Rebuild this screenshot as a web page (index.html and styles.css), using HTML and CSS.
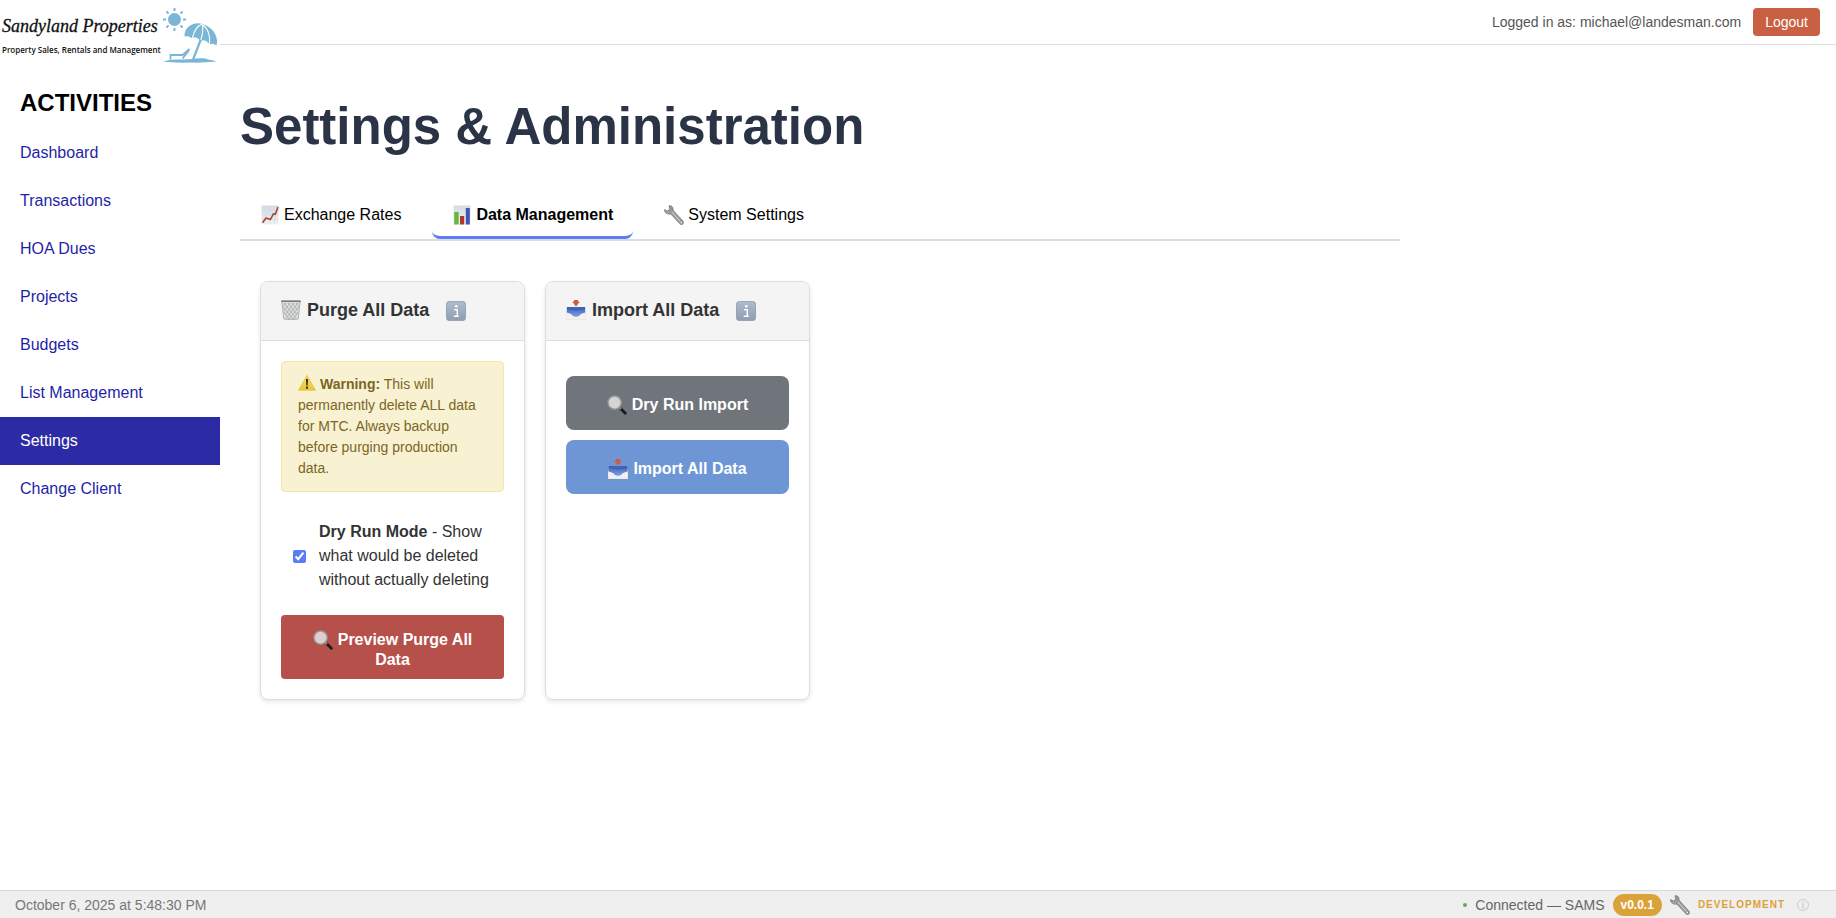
FILE: index.html
```html
<!DOCTYPE html>
<html lang="en">
<head>
<meta charset="utf-8">
<title>Settings &amp; Administration</title>
<link rel="stylesheet" href="styles.css">
</head>
<body>
<svg class="defs" aria-hidden="true">
  <defs>
    <linearGradient id="g-paper" x1="0" y1="0" x2="0" y2="1"><stop offset="0" stop-color="#d3dbe4"/><stop offset="1" stop-color="#eef1f4"/></linearGradient>
    <linearGradient id="g-metal" x1="0" y1="1" x2="1" y2="0"><stop offset="0" stop-color="#b4b6ba"/><stop offset="1" stop-color="#7e8084"/></linearGradient>
    <linearGradient id="g-info" x1="0" y1="0" x2="0" y2="1"><stop offset="0" stop-color="#b0bccd"/><stop offset="1" stop-color="#8e9db4"/></linearGradient>
    <linearGradient id="g-warn" x1="0" y1="0" x2="0" y2="1"><stop offset="0" stop-color="#f6df5e"/><stop offset="1" stop-color="#e8c63a"/></linearGradient>
    <linearGradient id="g-tray" x1="0" y1="0" x2="0" y2="1"><stop offset="0" stop-color="#3f5fae"/><stop offset="1" stop-color="#7da0ee"/></linearGradient>
    <symbol id="chart" viewBox="0 0 20 20">
      <rect x="1.500" y="0.500" width="17" height="19" fill="url(#g-paper)"/>
      <path d="M5.500 1v18M10 1v18M14.500 1v18M2 5.500h16M2 10h16M2 14.500h16" stroke="#cbd3dd" stroke-width=".4"/>
      <path d="M2.500 17.800L6 13l4.500 1.500 3-5.800 1.800.5L18 2" fill="none" stroke="#a8402f" stroke-width="1.500" stroke-linejoin="round"/>
    </symbol>
    <symbol id="bars" viewBox="0 0 20 20">
      <rect x="1.500" y="0.500" width="17" height="19" fill="url(#g-paper)"/>
      <rect x="2.200" y="7" width="4.500" height="12.500" fill="#69b544"/>
      <rect x="8" y="11" width="4.200" height="8.500" fill="#a83a28"/>
      <rect x="13.800" y="3" width="4" height="16.500" fill="#3f55b5"/>
    </symbol>
    <symbol id="wrench" viewBox="0 0 20 20">
      <path d="M.5 4.600L3.600 6 5.900 4 5 .8C7.600.2 9.600 2.400 9 5.200L19.200 16.400C20 18.600 18.400 20.300 16.400 19.300L6.800 9C3.600 9.800.4 8 .5 4.600Z" fill="url(#g-metal)" stroke="#6d6c70" stroke-width=".7"/>
      <path d="M7.800 6.800l8.500 9.600" stroke="#dbd9dc" stroke-width="1"/>
      <circle cx="17.300" cy="17.600" r=".8" fill="#eee"/>
    </symbol>
    <symbol id="basket" viewBox="0 0 20 20">
      <path d="M.8 1h18.400l-2 18q-7.200 1.500-14.400 0z" fill="#dcdddd"/>
      <path d="M3 3l12 15.500M7 3l9 12M11 3l6 8M15 3l3 4M2.500 7l9 12M3 12l5 7M17 3L5 18.500M13 3L4 15M9 3L3 11M5 3L2.500 6.500M17.500 7L8 19M17 12l-5 7" stroke="#9b9d9f" stroke-width=".6"/>
      <path d="M.8 1h18.400l-2 18q-7.200 1.500-14.400 0z" fill="none" stroke="#a0a1a3" stroke-width=".8"/>
      <path d="M.2 1.200h19.600" stroke="#77797b" stroke-width="1.400"/>
    </symbol>
    <symbol id="info" viewBox="0 0 20 20">
      <rect x=".4" y=".4" width="19.200" height="19.200" rx="3.200" fill="url(#g-info)" stroke="#8795ab" stroke-width=".8"/>
      <circle cx="10.300" cy="5.300" r="1.300" fill="#fff"/>
      <path d="M8 8.600h3.300v6.400M7.800 15.300h5" fill="none" stroke="#fff" stroke-width="1.400"/>
    </symbol>
    <symbol id="inbox" viewBox="0 0 20 20">
      <path d="M2 9h16l2 4.500V20H0v-6.500z" fill="#f3f1ee" stroke="#d2d0cd" stroke-width=".4"/>
      <path d="M.8 7h18.400v5.500L15 14q-2 3-5 3t-5-3L.8 12.500z" fill="url(#g-tray)"/>
      <path d="M1 8.500q9 3 18 0" fill="none" stroke="#35539c" stroke-width=".7"/>
      <path d="M8 0h4l.2 1.800h1.600L10 6.600 6.200 1.800h1.600z" fill="#cc5a45"/>
    </symbol>
    <symbol id="magnifier" viewBox="0 0 20 20">
      <path d="M13.500 13.500l4.800 4.700" stroke="#1b1b1c" stroke-width="2.800" stroke-linecap="round"/>
      <path d="M12 12l2 2" stroke="#8f8f91" stroke-width="2"/>
      <circle cx="7.600" cy="7.600" r="6.600" fill="#e6e3e4" fill-opacity=".86" stroke="#97989b" stroke-width="1.400"/>
    </symbol>
    <symbol id="warning" viewBox="0 0 20 20">
      <path d="M10 1.500L19.400 18H.6z" fill="url(#g-warn)" stroke="#e0bd3c" stroke-width=".8" stroke-linejoin="round"/>
      <path d="M8.900 5.500h2.200l-.5 7.500h-1.200z" fill="#222"/><circle cx="10" cy="15.200" r="1.200" fill="#222"/>
    </symbol>
  </defs>
</svg>

<div class="app">
  <aside class="sidebar">
    <div class="logo">
      <div class="logo-text">
        <span class="logo-name">Sandyland Properties</span>
        <span class="logo-tagline">Property Sales, Rentals and Management</span>
      </div>
      <svg class="logo-art" viewBox="0 0 54 56" aria-hidden="true">
        <g fill="#7ab6d6" stroke="#7ab6d6">
          <circle cx="11.500" cy="12.500" r="6.500" stroke="none"/>
          <path d="M11.500 1v3M11.500 21v3M0 12.500h3M20 12.500h3M3.400 4.400l2.200 2.200M17.400 18.400l2.200 2.200M3.400 20.600l2.200-2.200M17.400 6.600l2.200-2.200" stroke-width="2"/>
          <path d="M21.500 29.500C21 20 30 14.500 39 16.800 50 20 56 30 53.500 38.500 50.500 36.300 48.500 36.300 46.500 37.500 43.500 33.500 41 32.500 37.500 34 34.500 30.500 32 29.500 28.500 31 26 29.200 24 28.800 21.500 29.500Z" stroke="none"/>
          <path d="M38 32L29.500 54" stroke-width="2.200" fill="none"/>
          <path d="M0 54.500Q7 52.300 14 52.500 27 52.500 33 51.500 42 50.500 45 52.500 50 53 53.500 54.500 40 56 27 55.500 10 56 0 54.500Z" stroke="none"/>
          <path d="M7.500 52.500v-4.500H19.500L26.500 42M19.500 51.500L26 43.500M7 47.800h12.500" fill="none" stroke-width="1.800"/>
        </g>
        <path d="M39 17Q32 20 29.500 30.500M39.500 17.500Q40.500 25 37.800 33M39.500 17.500Q48 24 46.500 37" stroke="#fff" stroke-width="1.100" fill="none"/>
      </svg>
    </div>
    <h2 class="sidebar-title">ACTIVITIES</h2>
    <nav class="nav">
      <a class="nav-link" href="#dashboard">Dashboard</a>
      <a class="nav-link" href="#transactions">Transactions</a>
      <a class="nav-link" href="#hoa">HOA Dues</a>
      <a class="nav-link" href="#projects">Projects</a>
      <a class="nav-link" href="#budgets">Budgets</a>
      <a class="nav-link" href="#lists">List Management</a>
      <a class="nav-link active" href="#settings" aria-current="page">Settings</a>
      <a class="nav-link" href="#client">Change Client</a>
    </nav>
  </aside>

  <div class="content">
    <header class="topbar">
      <span class="user">Logged in as: michael@landesman.com</span>
      <button class="logout" type="button">Logout</button>
    </header>
    <main class="main">
      <h1 class="page-title">Settings &amp; Administration</h1>
      <div class="tabs" role="tablist">
        <button class="tab" type="button" role="tab"><svg class="emoji"><use href="#chart"/></svg>Exchange Rates</button>
        <button class="tab selected" type="button" role="tab" aria-selected="true"><svg class="emoji"><use href="#bars"/></svg>Data Management</button>
        <button class="tab" type="button" role="tab"><svg class="emoji"><use href="#wrench"/></svg>System Settings</button>
      </div>
      <div class="cards">
        <section class="card">
          <div class="card-head">
            <h3 class="card-title"><svg class="emoji"><use href="#basket"/></svg>Purge All Data</h3>
            <button class="info" type="button" aria-label="About purging"><svg class="emoji"><use href="#info"/></svg></button>
          </div>
          <div class="card-body">
            <p class="notice"><svg class="emoji"><use href="#warning"/></svg><strong>Warning:</strong> This will permanently delete ALL data for MTC. Always backup before purging production data.</p>
            <label class="dry-run" for="dry-run">
              <input class="check" id="dry-run" type="checkbox" checked>
              <span><strong>Dry Run Mode</strong> - Show what would be deleted without actually deleting</span>
            </label>
            <button class="btn btn-danger" type="button"><svg class="emoji"><use href="#magnifier"/></svg>Preview Purge All Data</button>
          </div>
        </section>
        <section class="card">
          <div class="card-head">
            <h3 class="card-title"><svg class="emoji"><use href="#inbox"/></svg>Import All Data</h3>
            <button class="info" type="button" aria-label="About importing"><svg class="emoji"><use href="#info"/></svg></button>
          </div>
          <div class="card-body">
            <div class="actions">
              <button class="btn btn-gray" type="button"><svg class="emoji"><use href="#magnifier"/></svg>Dry Run Import</button>
              <button class="btn btn-blue" type="button"><svg class="emoji"><use href="#inbox"/></svg>Import All Data</button>
            </div>
          </div>
        </section>
      </div>
    </main>
  </div>
</div>

<footer class="statusbar">
  <span class="date">October 6, 2025 at 5:48:30 PM</span>
  <div class="status">
    <span class="dot"></span>
    <span class="conn">Connected — SAMS</span>
    <span class="version">v0.0.1</span>
    <svg class="status-wrench" aria-hidden="true"><use href="#wrench"/></svg>
    <span class="env">DEVELOPMENT</span>
    <svg class="status-info" viewBox="0 0 12 12" aria-hidden="true"><circle cx="6" cy="6" r="5.500" fill="none" stroke="#c4c4c4" stroke-width=".8"/><path d="M4.800 5h1.400v3.800M4.600 8.900h3" fill="none" stroke="#c4c4c4" stroke-width=".8"/><circle cx="6" cy="3.200" r=".7" fill="#c4c4c4"/></svg>
  </div>
</footer>
</body>
</html>
```
FILE: styles.css
```css
* { box-sizing: border-box; }

body {
  margin: 0;
  min-height: 100vh;
  display: flex;
  flex-direction: column;
  font-family: "Liberation Sans", Arial, sans-serif;
  font-size: 16px;
  line-height: 24px;
  color: #333;
  background: #fff;
}

button { font: inherit; cursor: pointer; }
.defs { position: absolute; width: 0; height: 0; }

.app { display: flex; flex: 1; }

/* Sidebar */
.sidebar { width: 220px; flex: none; }
.logo { display: flex; height: 69px; padding: 7px 0 0 2px; gap: 5px; }
.logo-text {
  display: flex;
  flex-direction: column;
  flex: none;
  width: 156px;
  padding-top: 7px;
  color: #111;
  white-space: nowrap;
}
.logo-name {
  font: italic 18px/24px "Liberation Serif", serif;
  -webkit-text-stroke: 0.3px #111;
}
.logo-tagline {
  font: 600 8px/24px "Open Sans", sans-serif;
}
.logo-art { width: 54px; height: 56px; flex: none; }
.sidebar-title {
  margin: 20px 20px 12px;
  font-size: 24px;
  line-height: 28px;
  color: #000;
}
.nav { display: flex; flex-direction: column; }
.nav-link {
  padding: 12px 20px;
  color: #1f1fa8;
  text-decoration: none;
}
.nav-link.active { background: #2c2aa5; color: #fff; }

/* Header */
.content { flex: 1; min-width: 0; }
.topbar {
  display: flex;
  align-items: center;
  justify-content: flex-end;
  gap: 12px;
  height: 45px;
  padding: 0 16px;
  border-bottom: 1px solid #ddd;
  font-size: 14px;
  color: #555;
}
.logout {
  height: 28px;
  padding: 0 12px;
  border: 0;
  border-radius: 4px;
  background: #c96043;
  color: #fff;
}

/* Main */
.main { max-width: 1200px; padding: 51px 20px 50px; }
.page-title {
  margin: 0;
  font-size: 51px;
  line-height: 62px;
  color: #2a3446;
}
.tabs {
  display: flex;
  gap: 11px;
  margin-top: 31px;
  border-bottom: 2px solid #ddd;
}
.tab {
  display: flex;
  align-items: center;
  gap: 4px;
  padding: 14px 20px 9px;
  border: 0;
  border-bottom: 3px solid transparent;
  border-radius: 8px;
  background: none;
  color: #000;
}
.tab.selected { border-bottom-color: #5b7cf5; font-weight: bold; }
.emoji { width: 20px; height: 20px; flex: none; }

.cards {
  display: grid;
  grid-template-columns: repeat(auto-fill, minmax(250px, 1fr));
  gap: 20px;
  padding: 40px 20px 20px;
}
.card {
  overflow: hidden;
  border: 1px solid #ddd;
  border-radius: 8px;
  box-shadow: 0 2px 4px rgba(0, 0, 0, .1);
}
.card-head {
  display: flex;
  align-items: center;
  gap: 17px;
  height: 59px;
  padding: 0 20px;
  border-bottom: 1px solid #ddd;
  background: #f4f4f4;
}
.card-title {
  display: flex;
  align-items: center;
  gap: 6px;
  margin: 0;
  padding-bottom: 2px;
  font-size: 18px;
}
.info { display: flex; padding: 0; border: 0; background: none; }
.card-body { padding: 20px; }

.notice {
  margin: 0;
  padding: 12px 16px;
  border: 1px solid #f3e5ab;
  border-radius: 4px;
  background: #f9f2d2;
  font-size: 14px;
  line-height: 21px;
  color: #7a6626;
}
.notice .emoji { width: 18px; height: 18px; margin-right: 4px; vertical-align: -3px; }

.dry-run {
  display: flex;
  align-items: center;
  gap: 13px;
  padding: 28px 12px 23px;
}
.check { width: 13px; height: 13px; margin: 0; flex: none; accent-color: #5b7cf5; }

.btn {
  width: 100%;
  border: 0;
  color: #fff;
  font-weight: bold;
  line-height: 20px;
}
.btn .emoji { margin-right: 5px; vertical-align: top; }
.btn-danger {
  padding: 15px 24px 9px;
  border-radius: 4px;
  background: #b5504a;
}
.actions { display: grid; gap: 10px; padding-top: 15px; }
.btn-gray, .btn-blue { height: 54px; padding-top: 5px; border-radius: 8px; }
.btn-gray { background: #70757c; }
.btn-blue { background: #6e96d5; }

/* Status bar */
.statusbar {
  display: flex;
  align-items: center;
  justify-content: space-between;
  height: 28px;
  padding: 0 27px 0 15px;
  border-top: 1px solid #d8d8d8;
  background: #efefef;
  font-size: 14px;
  color: #666;
}
.date { color: #777; }
.status { display: flex; align-items: center; gap: 8px; }
.dot { width: 4px; height: 4px; border-radius: 50%; background: #6bab50; }
.version {
  padding: 0 8px;
  border-radius: 11px;
  background: #dca23a;
  color: #fff;
  font-size: 12px;
  font-weight: bold;
  line-height: 22px;
}
.status-wrench { width: 20px; height: 20px; }
.env {
  color: #dca23a;
  font-size: 10px;
  font-weight: bold;
  letter-spacing: 1px;
}
.status-info { width: 12px; height: 12px; margin-left: 4px; }
```
